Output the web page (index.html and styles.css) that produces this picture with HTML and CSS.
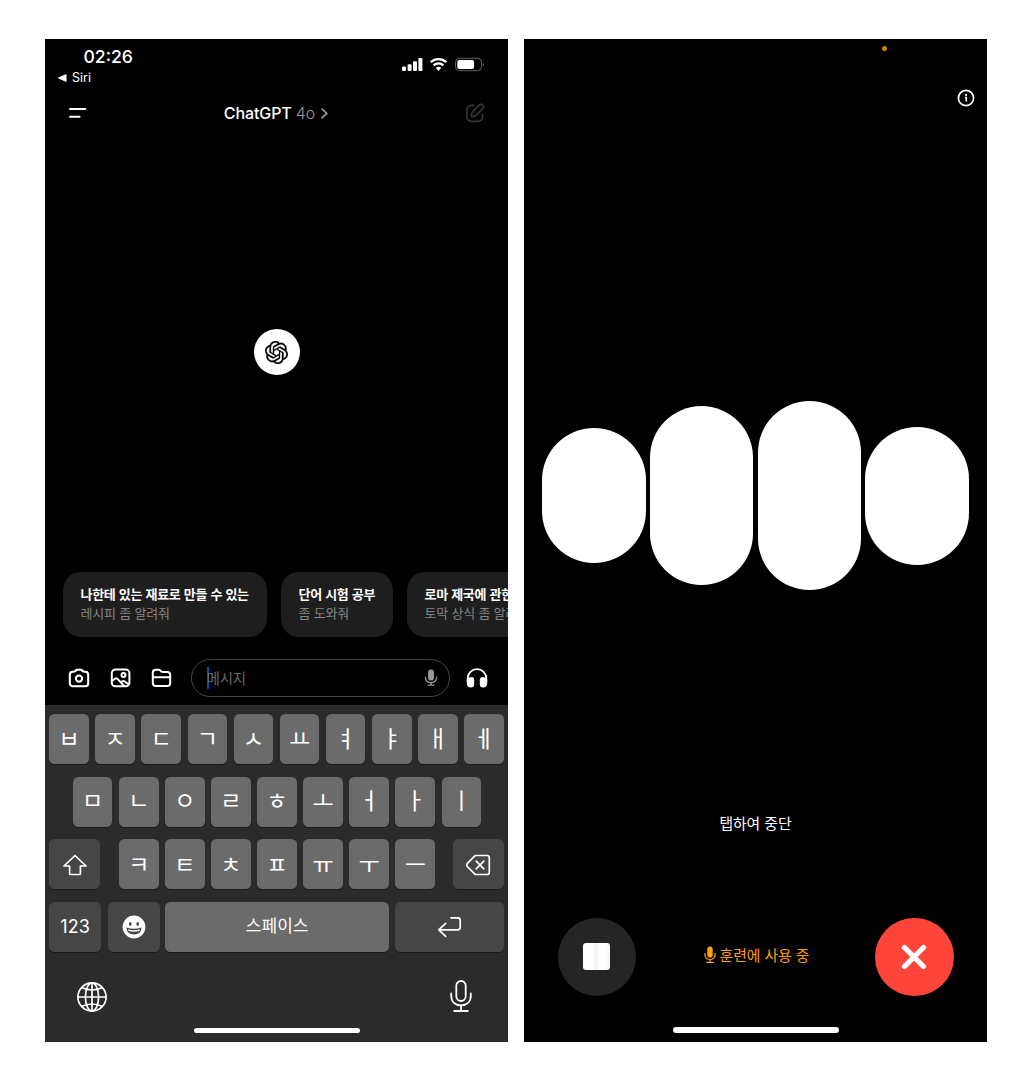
FILE: index.html
```html
<!DOCTYPE html>
<html lang="ko">
<head>
<meta charset="utf-8">
<title>ChatGPT</title>
<link rel="stylesheet" href="styles.css">
</head>
<body>
<main class="screens">
  <section class="phone">
    <div class="status">
      <div class="clock"><span class="time">02:26</span><span class="back"><svg width="9" height="8" viewBox="0 0 9 8"><path d="M.6 4 8 .8v6.4z" fill="#fff" stroke="#fff" stroke-width="1.1" stroke-linejoin="round"/></svg>Siri</span></div>
      <svg class="indicators" width="84" height="16" viewBox="0 0 84 16">
        <g fill="#fff"><rect x="1" y="9.5" width="4" height="4.5" rx="1"/><rect x="6.6" y="7.2" width="4" height="6.8" rx="1"/><rect x="12" y="4.2" width="4" height="9.8" rx="1"/><rect x="17.4" y="1" width="4" height="13" rx="1"/></g>
        <g fill="none" stroke="#fff" stroke-width="2.4"><path d="M29.7 5.2a11.3 11.3 0 0 1 15.6 0M32.6 8.4a7 7 0 0 1 9.8 0"/></g><path d="M37.5 14 34.8 11a4 4 0 0 1 5.4 0z" fill="#fff"/>
        <rect x="54.5" y="1.3" width="26" height="12.4" rx="4" fill="none" stroke="#606060"/><rect x="56.3" y="3" width="16.8" height="9" rx="2" fill="#fff"/><path d="M82 5.5q1.7 2 0 4z" fill="#777"/>
      </svg>
    </div>
    <header class="topbar">
      <svg width="20" height="20" viewBox="0 0 20 20" stroke="#fff" stroke-width="2" stroke-linecap="round"><path d="M3 6h15.3M3 13.7h9.6"/></svg>
      <h1 class="title">ChatGPT <span>4o</span><svg width="7" height="11" viewBox="0 0 7 11" fill="none" stroke="#a0a0a0" stroke-width="1.6" stroke-linecap="round" stroke-linejoin="round"><path d="m1 1 4.8 4.4L1 9.8"/></svg></h1>
      <svg width="20" height="20" viewBox="0 0 20 20" fill="none" stroke="#353535" stroke-width="1.7" stroke-linecap="round" stroke-linejoin="round"><path d="M8.6 2.4H6.4a4.6 4.6 0 0 0-4.6 4.6v6.7a4.6 4.6 0 0 0 4.6 4.6h6.7a4.6 4.6 0 0 0 4.6-4.6v-2.2M7.2 9.3l7-7.1a2.4 2.4 0 0 1 3.5 3.4l-7 7.1c-.9.9-2.2 1-4.2 1 0-1.7-.2-3.5.7-4.4z"/></svg>
    </header>
    <div class="hero">
      <div class="logo"><svg width="23" height="23" viewBox="0 0 24 24" fill="#000" stroke="#000" stroke-width=".3"><path d="M22.2819 9.8211a5.9847 5.9847 0 0 0-.5157-4.9108 6.0462 6.0462 0 0 0-6.5098-2.9A6.0651 6.0651 0 0 0 4.9807 4.1818a5.9847 5.9847 0 0 0-3.9977 2.9 6.0462 6.0462 0 0 0 .7427 7.0966 5.98 5.98 0 0 0 .511 4.9107 6.051 6.051 0 0 0 6.5146 2.9001A5.9847 5.9847 0 0 0 13.2599 24a6.0557 6.0557 0 0 0 5.7718-4.2058 5.9894 5.9894 0 0 0 3.9977-2.9001 6.0557 6.0557 0 0 0-.7475-7.0729zm-9.022 12.6081a4.4755 4.4755 0 0 1-2.8764-1.0408l.1419-.0804 4.7783-2.7582a.7948.7948 0 0 0 .3927-.6813v-6.7369l2.02 1.1686a.071.071 0 0 1 .038.052v5.5826a4.504 4.504 0 0 1-4.4945 4.4944zm-9.6607-4.1254a4.4708 4.4708 0 0 1-.5346-3.0137l.142.0852 4.783 2.7582a.7712.7712 0 0 0 .7806 0l5.8428-3.3685v2.3324a.0804.0804 0 0 1-.0332.0615L9.74 19.9502a4.4992 4.4992 0 0 1-6.1408-1.6464zM2.3408 7.8956a4.485 4.485 0 0 1 2.3655-1.9728V11.6a.7664.7664 0 0 0 .3879.6765l5.8144 3.3543-2.0201 1.1685a.0757.0757 0 0 1-.071 0l-4.8303-2.7865A4.504 4.504 0 0 1 2.3408 7.872zm16.5963 3.8558L13.1038 8.364 15.1192 7.2a.0757.0757 0 0 1 .071 0l4.8303 2.7913a4.4944 4.4944 0 0 1-.6765 8.1042v-5.6772a.79.79 0 0 0-.407-.667zm2.0107-3.0231l-.142-.0852-4.7735-2.7818a.7759.7759 0 0 0-.7854 0L9.409 9.2297V6.8974a.0662.0662 0 0 1 .0284-.0615l4.8303-2.7866a4.4992 4.4992 0 0 1 6.6802 4.66zM8.3065 12.863l-2.02-1.1638a.0804.0804 0 0 1-.038-.0567V6.0742a4.4992 4.4992 0 0 1 7.3757-3.4537l-.142.0805L8.704 5.459a.7948.7948 0 0 0-.3927.6813zm1.0976-2.3654l2.602-1.4998 2.6069 1.4998v2.9994l-2.5974 1.4997-2.6067-1.4997Z"/></svg></div>
    </div>
    <div class="suggestions">
      <div class="card first"><b>나한테 있는 재료로 만들 수 있는</b><span>레시피 좀 알려줘</span></div>
      <div class="card second"><b>단어 시험 공부</b><span>좀 도와줘</span></div>
      <div class="card third"><b>로마 제국에 관한</b><span>토막 상식 좀 알려줘</span></div>
    </div>
    <div class="composer">
      <svg width="22" height="20" viewBox="0 0 22 20" fill="none" stroke="#fff" stroke-width="2.1" stroke-linejoin="round"><path d="M7.4 3 8.6 1.7h4.8L14.6 3l1.3.7h1.300a3 3 0 0 1 3 3v8.500a3 3 0 0 1-3 3H4.800a3 3 0 0 1-3-3V6.700a3 3 0 0 1 3-3h1.300z"/><circle cx="11" cy="10.600" r="3.100"/></svg>
      <svg width="22" height="20" viewBox="0 0 22 20" fill="none" stroke="#fff" stroke-width="2" stroke-linejoin="round"><rect x="1.800" y="1.600" width="17.600" height="16.600" rx="3.500"/><circle cx="13.500" cy="7" r="2"/><path d="m2 13 3-2.300q1.300-.9 2.500.2L14.200 18M11.700 13.700q1.500-1.300 3-.2l4.500 3.200"/></svg>
      <svg width="22" height="20" viewBox="0 0 22 20" fill="none" stroke="#fff" stroke-width="2" stroke-linejoin="round"><path d="M1.800 14.900V4.800a3 3 0 0 1 3-3h2.800q1.100 0 1.900.8l.9.900q.6.500 1.500.5h4.300a3 3 0 0 1 3 3v7.900a3 3 0 0 1-3 3H4.800a3 3 0 0 1-3-3zM1.800 9.200h17.400"/></svg>
      <div class="field"><i class="caret"></i><span>메시지</span>
        <svg width="14" height="18" viewBox="0 0 14 18"><rect x="4" y=".6" width="6" height="11" rx="3" fill="#999"/><path d="M1.400 8.200v.6a5.600 4.800 0 0 0 11.200 0v-.6M7 13.600v2.500M4.200 16.200h5.600" fill="none" stroke="#999" stroke-width="1.300" stroke-linecap="round"/></svg>
      </div>
      <svg width="22" height="20" viewBox="0 0 22 20"><path d="M1.700 14V10.500a9.300 9.300 0 0 1 18.600 0V14" fill="none" stroke="#fff" stroke-width="1.800"/><path d="M.8 11.500v4.200q.5 3.800 4.100 3.800 3.300 0 3.300-3v-4.500Q8.100 9 5.400 9.100 2.200 9.300.8 11.500zM21.200 11.500v4.200q-.5 3.800-4.100 3.800-3.300 0-3.300-3v-4.500q.1-3 2.800-2.900 3.200.2 4.600 2.400z" fill="#fff"/></svg>
    </div>
    <div class="keyboard">
      <div class="row first-row"><kbd>ㅂ</kbd><kbd>ㅈ</kbd><kbd>ㄷ</kbd><kbd>ㄱ</kbd><kbd>ㅅ</kbd><kbd>ㅛ</kbd><kbd>ㅕ</kbd><kbd>ㅑ</kbd><kbd>ㅐ</kbd><kbd>ㅔ</kbd></div>
      <div class="row second-row"><kbd>ㅁ</kbd><kbd>ㄴ</kbd><kbd>ㅇ</kbd><kbd>ㄹ</kbd><kbd>ㅎ</kbd><kbd>ㅗ</kbd><kbd>ㅓ</kbd><kbd>ㅏ</kbd><kbd>ㅣ</kbd></div>
      <div class="row spread">
        <kbd class="dark side"><svg width="26" height="22" viewBox="0 0 26 22" fill="none" stroke="#fff" stroke-width="1.700" stroke-linejoin="round"><path d="M13 1.500 24 12h-5.600v7.500q0 1-1 1H8.600q-1 0-1-1V12H2z"/></svg></kbd>
        <div class="group"><kbd>ㅋ</kbd><kbd>ㅌ</kbd><kbd>ㅊ</kbd><kbd>ㅍ</kbd><kbd>ㅠ</kbd><kbd>ㅜ</kbd><kbd>ㅡ</kbd></div>
        <kbd class="dark side"><svg width="26" height="22" viewBox="0 0 26 22" fill="none" stroke="#fff" stroke-width="1.700" stroke-linecap="round" stroke-linejoin="round"><path d="M11 1.500h11q2.300 0 2.300 2.300v14.400q0 2.300-2.300 2.300H11q-.8 0-1.400-.6L2.200 12.300q-1-1.300 0-2.600L9.600 2.100q.6-.6 1.400-.6zM11.200 7.200l7.600 7.600M18.800 7.200l-7.600 7.600"/></svg></kbd>
      </div>
      <div class="row bottom">
        <kbd class="dark num">123</kbd>
        <kbd class="dark emoji"><svg width="24" height="24" viewBox="0 0 24 24"><circle cx="12" cy="12" r="11.400" fill="#fff"/><g fill="#454545"><ellipse cx="8.300" cy="8.900" rx="1.300" ry="1.900"/><ellipse cx="15.700" cy="8.900" rx="1.300" ry="1.900"/><path d="M4.500 12.500q7.500 2.600 15 0Q19 19.500 12 19.500T4.500 12.500z"/></g><path d="M6 14.300q6 1.700 12 0l-.7 1.700q-5.300 1.500-10.600 0z" fill="#fff"/></svg></kbd>
        <kbd class="space">스페이스</kbd>
        <kbd class="dark return"><svg width="26" height="22" viewBox="0 0 26 22" fill="none" stroke="#fff" stroke-width="1.700" stroke-linecap="round" stroke-linejoin="round"><path d="M15 1.800h6.700q2.500 0 2.500 2.500v7q0 2.500-2.500 2.500H2.700M9.700 7.300l-7 6.500 7 6.500"/></svg></kbd>
      </div>
      <div class="tools">
        <svg width="30" height="30" viewBox="0 0 30 30" fill="none" stroke="#fff" stroke-width="1.700"><circle cx="15" cy="15" r="14.100"/><ellipse cx="15" cy="15" rx="6.600" ry="14.100"/><path d="M15 1v28M1 15h28M4.500 5.500q10.500 5 21 0M4.500 24.500q10.500-5 21 0"/></svg>
        <svg width="22" height="34" viewBox="0 0 22 34" fill="none" stroke="#fff" stroke-width="1.800" stroke-linecap="round"><rect x="6.300" y="1" width="9.400" height="20" rx="4.700"/><path d="M1.200 13.500v2.300c0 6 4 9.500 9.800 9.500s9.800-3.500 9.800-9.500V13.500M11 25.300V31M4.200 31h13.600"/></svg>
      </div>
      <div class="home"></div>
    </div>
  </section>

  <section class="phone voice">
    <div class="dot"></div>
    <svg class="info" width="18" height="18" viewBox="0 0 18 18"><circle cx="9" cy="9" r="7.600" fill="none" stroke="#fff" stroke-width="1.700"/><circle cx="9" cy="5.900" r="1.050" fill="#fff"/><path d="M7.900 8.600H9.300V12.500" fill="none" stroke="#fff" stroke-width="1.600"/></svg>
    <div class="orbs"><i class="orb a"></i><i class="orb b"></i><i class="orb c"></i><i class="orb d"></i></div>
    <p class="tap">탭하여 중단</p>
    <div class="controls">
      <div class="round stop"><i></i></div>
      <p class="mode"><svg width="12" height="18" viewBox="0 0 12 18"><rect x="3.300" y=".6" width="5.400" height="11" rx="2.700" fill="#ff9f0a"/><path d="M.9 7.500v1.200a5.100 4.800 0 0 0 10.200 0V7.500M6 13.500v2.800M2.600 16.400h6.800" fill="none" stroke="#ff9f0a" stroke-width="1.200" stroke-linecap="round"/></svg>훈련에 사용 중</p>
      <div class="round close"><svg width="26" height="26" viewBox="0 0 26 26" stroke="#fff" stroke-width="5.300" stroke-linecap="round"><path d="m3.500 3.500 19 19M22.500 3.500l-19 19"/></svg></div>
    </div>
    <div class="home"></div>
  </section>
</main>
</body>
</html>
```
FILE: styles.css
```css
* { box-sizing: border-box; }
body { margin: 0; background: #fff; font-family: Inter, "Noto Sans CJK KR", sans-serif; color: #fff; }
svg { display: block; flex: none; }
p, h1 { margin: 0; font-weight: 400; }
.screens { display: flex; gap: 16px; padding: 39px 45px 38px; }
.phone { width: 463px; height: 1003px; background: #000; overflow: hidden; display: flex; flex-direction: column; flex: none; }

.status { height: 54px; padding: 8px 23px 0 13px; display: flex; justify-content: space-between; }
.clock { display: flex; flex-direction: column; }
.time { font-size: 17.6px; font-weight: 500; line-height: 20px; padding-left: 25.5px; }
.back { display: flex; align-items: center; gap: 5px; font-size: 12.5px; font-weight: 400; line-height: 21px; }
.indicators { margin-top: 10px; }

.topbar { height: 40px; padding: 0 23px 0 22px; display: flex; align-items: center; justify-content: space-between; }
.title { display: flex; align-items: center; font-size: 16px; font-weight: 500; line-height: 20px; letter-spacing: -.1px; white-space: pre; }
.title span { color: #999; font-weight: 350; margin-right: 6px; }

.hero { height: 439px; padding-top: 196px; display: flex; justify-content: center; }
.logo { width: 46px; height: 46px; border-radius: 50%; background: #fff; display: flex; align-items: center; justify-content: center; }

.suggestions { display: flex; gap: 14px; padding-left: 18px; }
.card { flex: none; height: 65px; border-radius: 18px; background: #1e1e1e; padding: 13px 0 0 17.5px; display: flex; flex-direction: column; font-family: "Noto Sans CJK KR", sans-serif; font-size: 13px; line-height: 18.5px; white-space: nowrap; }
.card b { font-weight: 700; letter-spacing: -.3px; }
.card span { color: #858585; letter-spacing: -.2px; }
.first { width: 204px; }
.second { width: 112px; }
.third { width: 150px; }

.composer { height: 68px; padding: 14px 20px 0 23px; display: flex; align-items: center; gap: 19.5px; }
.field { width: 259px; height: 38px; margin: 0 -3px 0 -2px; border: 1px solid #454545; border-radius: 19px; padding: 0 11px 0 15px; display: flex; align-items: center; }
.field span { flex: 1; color: #686868; font: 14.5px/20px "Noto Sans CJK KR", sans-serif; letter-spacing: -.2px; margin: -1px 0 0 -2px; }
.caret { width: 2px; height: 22px; background: #0a52a8; }

.keyboard { height: 337px; padding: 9px 4.3px 0; background: #2b2b2b; display: flex; flex-direction: column; gap: 12.7px; }
.row, .group { display: flex; gap: 6.5px; justify-content: center; }
.second-row { padding-left: 1px; }
.spread { justify-content: space-between; }
.group { margin-left: 1px; }
kbd { width: 39.6px; height: 50px; border-radius: 5.5px; background: #6b6b6b; box-shadow: 0 1px 0 #1b1b1b; display: flex; align-items: center; justify-content: center; padding-bottom: 5px; font: 23px/45px "Noto Sans CJK KR", sans-serif; }
.first-row kbd { padding-bottom: 4px; line-height: 46px; }
.group kbd { padding-bottom: 2px; line-height: 48px; }
.dark { background: #464646; padding-bottom: 0; }
.side { width: 50.5px; }
.spread .side { padding-top: 2px; }
.bottom { gap: 0; justify-content: space-between; }
.num { width: 51.5px; font: 18px/50px Inter, sans-serif; }
.emoji { width: 52px; margin-left: 1px; }
.space { width: 223.5px; font-size: 17px; line-height: 46px; padding-bottom: 5px; }
.return { width: 109px; }
.tools { display: flex; justify-content: space-between; padding: 14px 32px 0 28px; height: 50px; align-items: center; }
.home { width: 166px; height: 5.5px; border-radius: 3px; background: #fff; margin: .4px auto 0; flex: none; }

.voice { align-items: center; }
.dot { width: 5px; height: 5px; border-radius: 50%; background: #d0800c; margin: 7px 0 0 257px; flex: none; }
.info { margin: 38px 12px 0 0; align-self: flex-end; }
.orbs { height: 190px; margin-top: 293.5px; display: flex; align-items: center; gap: 4.3px; }
.orb { width: 103.5px; border-radius: 52px; background: #fff; }
.a { height: 135px; }
.b { height: 179px; }
.c { height: 189px; }
.d { height: 138px; }
.tap { height: 22px; margin-top: 221.5px; font: 14.8px/22px "Noto Sans CJK KR", sans-serif; }
.controls { align-self: stretch; margin-top: 83.5px; padding: 0 33.5px; display: flex; justify-content: space-between; align-items: center; }
.round { width: 78.5px; height: 78.5px; border-radius: 50%; display: flex; align-items: center; justify-content: center; }
.stop { background: #252525; }
.stop i { width: 27px; height: 27px; border-radius: 3px; background: linear-gradient(90deg, #fff 42%, #f4f4f4 43% 56%, #fff 57% 85%, #f4f4f4); }
.close { background: #ff453a; }
.mode { display: flex; align-items: center; gap: 4px; color: #ff9f0a; font: 14.8px/22px "Noto Sans CJK KR", sans-serif; margin: -3px 0 0 2px; }
.voice .home { margin-top: 31px; }
```
